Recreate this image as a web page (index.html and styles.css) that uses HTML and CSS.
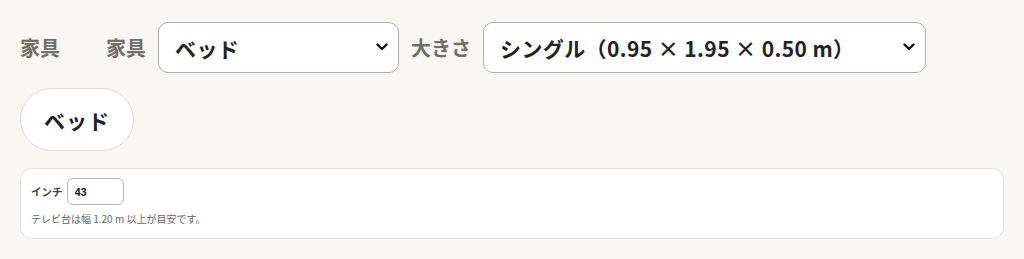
FILE: index.html
```html
<!DOCTYPE html>
<html lang="ja">
<head>
    <meta charset="UTF-8">
    <meta name="viewport" content="width=device-width, initial-scale=1.0">
    <title>家具</title>
    <link rel="stylesheet" href="styles.css">
</head>
<body>

    <!-- Furniture picker -->
    <div class="picker">
        <span class="section-title">家具</span>

        <label class="field">
            <span class="field-label">家具</span>
            <span class="select-wrap select-type">
                <select>
                    <option>ベッド</option>
                    <option>ソファ</option>
                    <option>テレビ台</option>
                </select>
                <svg class="chevron" viewBox="0 0 12 8" aria-hidden="true"><path d="M1.5 1.5 L6 6 L10.5 1.5" fill="none" stroke="#111" stroke-width="2.4" stroke-linecap="round" stroke-linejoin="round"/></svg>
            </span>
        </label>

        <label class="field">
            <span class="field-label">大きさ</span>
            <span class="select-wrap select-size">
                <select>
                    <option>シングル（0.95 × 1.95 × 0.50 m）</option>
                    <option>セミダブル（1.20 × 1.95 × 0.50 m）</option>
                    <option>ダブル（1.40 × 1.95 × 0.50 m）</option>
                </select>
                <svg class="chevron" viewBox="0 0 12 8" aria-hidden="true"><path d="M1.5 1.5 L6 6 L10.5 1.5" fill="none" stroke="#111" stroke-width="2.4" stroke-linecap="round" stroke-linejoin="round"/></svg>
            </span>
        </label>

        <button class="pill">ベッド</button>
    </div>

    <!-- TV size card -->
    <div class="card">
        <label class="inch-row">
            <span class="inch-label">インチ</span>
            <input class="inch-input" type="text" value="43">
        </label>
        <p class="hint">テレビ台は幅 1.20 m 以上が目安です。</p>
    </div>

</body>
</html>
```

FILE: styles.css
```css
body {
    margin: 0;
    padding: 22px 20px 0;
    background-color: #f8f7f2; /* warm off-white */
    font-family: "Noto Sans CJK JP", "Liberation Sans", sans-serif;
    color: #222;
}

/* Top row: title, selects, pill button */
.picker {
    display: flex;
    flex-wrap: wrap;
    align-items: center;
    gap: 15px 12px;
}

.section-title {
    width: 74px;
    font-size: 20px;
    font-weight: 700;
    color: #726d65;
}

.field {
    display: flex;
    align-items: center;
    gap: 12px;
}

.field-label {
    font-size: 20px;
    font-weight: 700;
    color: #726d65;
}

.select-wrap {
    position: relative;
    display: block;
}

.select-wrap select {
    appearance: none;
    -webkit-appearance: none;
    width: 100%;
    height: 51px;
    padding: 0 40px 0 16px;
    font-family: inherit;
    font-size: 21px;
    font-weight: 700;
    letter-spacing: 0.4px;
    color: #222;
    background-color: #fff;
    border: 1.5px solid #b3b0aa;
    border-radius: 10px;
}

.select-type {
    width: 241px;
}

.select-size {
    width: 443px;
}

/* Drawn arrow over the select */
.chevron {
    position: absolute;
    right: 11px;
    top: 21px;
    width: 12px;
    height: 8px;
    pointer-events: none;
}

.pill {
    height: 63px;
    padding: 0 23px;
    font-family: inherit;
    font-size: 21px;
    font-weight: 700;
    letter-spacing: 1px;
    color: #222;
    background-color: #fff;
    border: 1.5px solid #dcdad5;
    border-radius: 32px;
}

/* Card below */
.card {
    margin-top: 17px;
    padding: 9px 10px 12px;
    background-color: #fff;
    border: 1px solid #e3e1dc;
    border-radius: 12px;
}

.inch-row {
    display: flex;
    align-items: center;
    gap: 4px;
}

.inch-label {
    font-size: 10.5px;
    font-weight: 700;
    color: #444;
}

.inch-input {
    box-sizing: border-box;
    width: 57px;
    height: 27px;
    padding: 0 7px;
    font-family: "Liberation Sans", sans-serif;
    font-size: 11px;
    font-weight: 700;
    color: #111;
    border: 1px solid #b9b6b0;
    border-radius: 6px;
}

.hint {
    margin: 6px 0 0;
    font-size: 10px;
    color: #666;
}
```
